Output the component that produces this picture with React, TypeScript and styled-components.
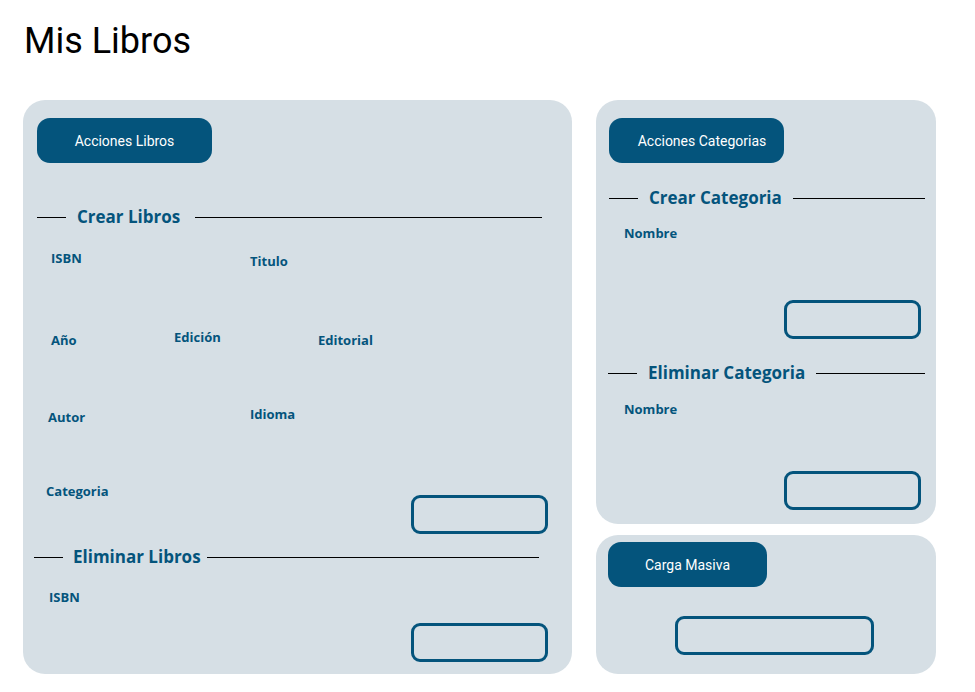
import { createGlobalStyle, styled } from "styled-components";

const blue = "#04547c";
const panelBg = "#d6dfe5";

const GlobalStyle = createGlobalStyle`
  body {
    margin: 0;
    background: #fff;
    font-family: Roboto, "Liberation Sans", sans-serif;
  }
`;

function SectionTitle(props: { title: string; after?: number; shift?: number }) {
  return (
    <Heading $after={props.after ?? 12} $shift={props.shift ?? 0}>
      <HeadingLine $w={29} />
      <HeadingText>{props.title}</HeadingText>
      <HeadingLine />
    </Heading>
  );
}

function Field(props: { label: string; w?: number; dx?: number; dy?: number }) {
  return (
    <FieldBox $w={props.w} $dx={props.dx ?? 0} $dy={props.dy ?? 0}>
      <Label>{props.label}</Label>
    </FieldBox>
  );
}

export default function App() {
  return (
    <>
      <GlobalStyle />
      <Page>
        <Title>Mis Libros</Title>
        <Columns>
          <Panel $h={574}>
            <ActionButton $w={175}>Acciones Libros</ActionButton>
            <Gap $h={42} />
            <SectionTitle title="Crear Libros" after={15} />
            <Gap $h={19} />
            <Row $h={79}>
              <Field label="ISBN" w={213} dx={14} />
              <Field label="Titulo" dy={3} />
            </Row>
            <Row $h={77}>
              <Field label="Año" w={137} dx={14} dy={3} />
              <Field label="Edición" w={144} />
              <Field label="Editorial" dy={3} />
            </Row>
            <Row $h={77}>
              <Field label="Autor" w={213} dx={11} dy={3} />
              <Field label="Idioma" />
            </Row>
            <Row $h={63}>
              <Field label="Categoria" dx={9} />
              <OutlineButton $w={137} $mt={14} $ml="auto" $mr={24} />
            </Row>
            <Gap $h={1} />
            <SectionTitle title="Eliminar Libros" after={6} shift={-3} />
            <Gap $h={18} />
            <Row $h={36}>
              <Field label="ISBN" dx={12} />
            </Row>
            <Row $h={39}>
              <OutlineButton $w={137} $ml="auto" $mr={24} />
            </Row>
          </Panel>
          <Side>
            <Panel $h={424}>
              <ActionButton $w={175} $pl={11}>
                Acciones Categorias
              </ActionButton>
              <Gap $h={23} />
              <SectionTitle title="Crear Categoria" after={11} />
              <Gap $h={13} />
              <Row $h={77}>
                <Field label="Nombre" dx={15} />
              </Row>
              <Row $h={39}>
                <OutlineButton $w={137} $ml="auto" $mr={15} />
              </Row>
              <Gap $h={22} />
              <SectionTitle title="Eliminar Categoria" after={11} shift={-1} />
              <Gap $h={14} />
              <Row $h={72}>
                <Field label="Nombre" dx={15} />
              </Row>
              <Row $h={39}>
                <OutlineButton $w={137} $ml="auto" $mr={15} />
              </Row>
            </Panel>
            <SmallPanel>
              <ActionButton $w={159}>Carga Masiva</ActionButton>
              <Gap $h={29} />
              <Row $h={39}>
                <OutlineButton $w={199} $ml="67px" />
              </Row>
            </SmallPanel>
          </Side>
        </Columns>
      </Page>
    </>
  );
}

const Page = styled.div`
  width: 975px;
  height: 692px;
  padding: 19px 0 0 23px;
  box-sizing: border-box;
`;

const Title = styled.h1`
  margin: 0 0 36px 1px;
  font-family: Roboto, "Liberation Sans", sans-serif;
  font-weight: 400;
  font-size: 36px;
  line-height: 45px;
  color: #000;
`;

const Columns = styled.div`
  display: flex;
  gap: 24px;
  align-items: flex-start;
`;

const Side = styled.div`
  display: flex;
  flex-direction: column;
  gap: 11px;
  width: 340px;
`;

const Panel = styled.section<{ $h: number }>`
  display: flex;
  flex-direction: column;
  height: ${(p) => p.$h}px;
  flex: 1 0 auto;
  max-width: 549px;
  width: 549px;
  box-sizing: border-box;
  padding: 18px 0 0 14px;
  background: ${panelBg};
  border-radius: 22px;
  ${Side} & {
    width: 340px;
    padding-left: 13px;
  }
`;

const SmallPanel = styled.section`
  display: flex;
  flex-direction: column;
  height: 139px;
  box-sizing: border-box;
  padding: 7px 0 0 12px;
  background: ${panelBg};
  border-radius: 22px;
`;

const ActionButton = styled.button<{ $w: number; $pl?: number }>`
  width: ${(p) => p.$w}px;
  height: 45px;
  flex: none;
  box-sizing: border-box;
  padding: 0 0 0 ${(p) => p.$pl ?? 0}px;
  border: none;
  border-radius: 13px;
  background: ${blue};
  color: #fff;
  font-family: Roboto, "Liberation Sans", sans-serif;
  font-size: 14px;
  cursor: pointer;
`;

const OutlineButton = styled.button<{ $w: number; $mt?: number; $ml?: string; $mr?: number }>`
  width: ${(p) => p.$w}px;
  height: 39px;
  flex: none;
  margin-top: ${(p) => p.$mt ?? 0}px;
  margin-left: ${(p) => p.$ml ?? "0"};
  margin-right: ${(p) => p.$mr ?? 0}px;
  box-sizing: border-box;
  border: 3px solid ${blue};
  border-radius: 9px;
  background: transparent;
  cursor: pointer;
`;

const Gap = styled.div<{ $h: number }>`
  flex: none;
  height: ${(p) => p.$h}px;
`;

const Heading = styled.div<{ $after: number; $shift: number }>`
  display: flex;
  align-items: center;
  height: 24px;
  flex: none;
  margin-left: ${(p) => p.$shift}px;
  margin-right: ${(p) => 30 - p.$shift}px;
  & > span {
    margin: 0 ${(p) => p.$after}px 0 ${(p) => (p.$shift < -1 ? 10 : 11)}px;
  }
  ${Side} & {
    margin-right: 11px;
  }
`;

const HeadingLine = styled.div<{ $w?: number }>`
  height: 1px;
  background: #000;
  ${(p) => (p.$w ? `width: ${p.$w}px; flex: none;` : "flex: 1;")}
`;

const HeadingText = styled.span`
  font-family: "Open Sans", "Noto Sans", sans-serif;
  font-weight: 700;
  font-size: 17px;
  line-height: 24px;
  color: ${blue};
  white-space: nowrap;
`;

const Row = styled.div<{ $h: number }>`
  display: flex;
  align-items: flex-start;
  height: ${(p) => p.$h}px;
  flex: none;
`;

const FieldBox = styled.div<{ $w?: number; $dx: number; $dy: number }>`
  ${(p) => (p.$w ? `width: ${p.$w}px;` : "")}
  flex: none;
  box-sizing: border-box;
  padding-left: ${(p) => p.$dx}px;
  margin-top: ${(p) => p.$dy}px;
`;

const Label = styled.label`
  font-family: "Open Sans", "Noto Sans", sans-serif;
  font-weight: 700;
  font-size: 13px;
  line-height: 20px;
  color: ${blue};
`;
